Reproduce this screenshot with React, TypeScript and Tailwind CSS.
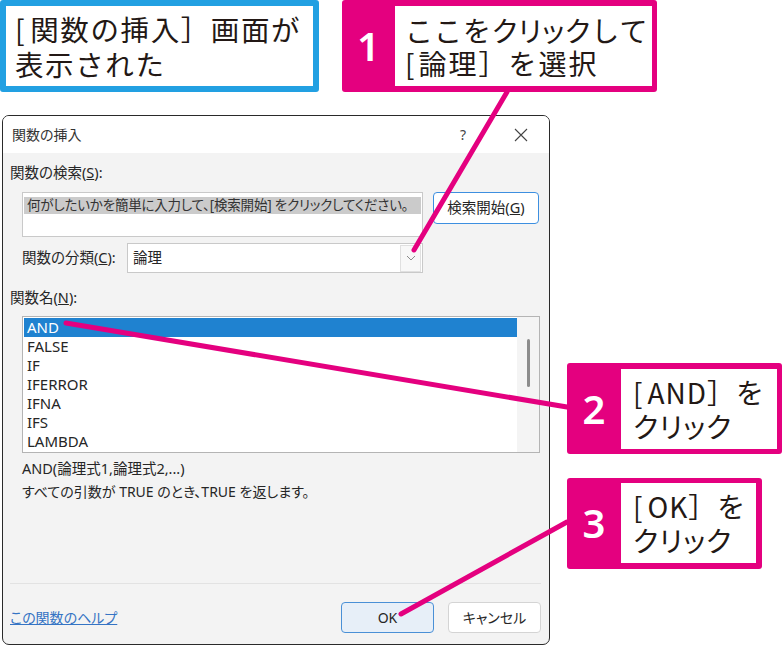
import React from "react";

const PINK = "bg-[#e4007f]";

function NumBox({ n }: { n: string }) {
  return (
    <div className="flex items-center justify-center text-white font-['Noto_Sans',sans-serif] font-semibold text-[40px] leading-none">
      {n}
    </div>
  );
}

function Dialog() {
  return (
    <div className="ml-[2px] w-[548px] h-[530px] border border-[#2a2a2a] rounded-[7px] overflow-hidden flex flex-col bg-[#f3f3f3] text-[#262626] font-['Noto_Sans','Noto_Sans_CJK_JP',sans-serif] [font-feature-settings:'palt']">
      {/* title bar */}
      <div className="h-[37px] bg-white flex items-center shrink-0">
        <div className="ml-[9px] text-[14px] leading-none text-[#333]">関数の挿入</div>
        <div className="ml-auto w-[58px] flex justify-center text-[14px] text-[#444] leading-none">?</div>
        <div className="w-[57px] flex justify-center">
          <svg width="14" height="14" viewBox="0 0 14 14">
            <path d="M1 1 L13 13 M13 1 L1 13" stroke="#444" strokeWidth="1.1" fill="none" />
          </svg>
        </div>
      </div>
      {/* body */}
      <div className="flex-1 flex flex-col text-[14.5px]">
        <div className="mt-[9px] ml-[7px] h-[20px] leading-[20px]">
          関数の検索(<span className="underline">S</span>):
        </div>
        <div className="mt-[10px] flex items-start">
          <div className="ml-[19px] w-[401px] h-[45px] bg-white border border-[#c9c9c9] pt-[4px] px-[1px] overflow-hidden">
            <div className="h-[17px] bg-[#cbcbcb] leading-[17px] whitespace-nowrap pl-[3px] text-[13.5px] tracking-[-0.2px] text-[#333]">
              何がしたいかを簡単に入力して、[検索開始] をクリックしてください。
            </div>
          </div>
          <div className="ml-[10px] w-[106px] h-[32px] bg-white border-[1.5px] border-[#3d8fe0] rounded-[4px] flex items-center justify-center">
            検索開始(<span className="underline">G</span>)
          </div>
        </div>
        <div className="mt-[6px] h-[30px] flex items-center">
          <div className="ml-[19px] w-[105px]">
            関数の分類(<span className="underline">C</span>):
          </div>
          <div className="w-[296px] h-[30px] bg-white border border-[#c9c9c9] flex items-center">
            <div className="pl-[5px] flex-1">論理</div>
            <div className="w-[21px] h-[27px] mr-[1px] border border-[#e0e0e0] bg-[#f8f8f8] flex items-center justify-center">
              <svg width="10" height="6" viewBox="0 0 10 6">
                <path d="M1 1 L5 5 L9 1" stroke="#8a8a8a" strokeWidth="1" fill="none" />
              </svg>
            </div>
          </div>
        </div>
        <div className="mt-[14px] ml-[7px] h-[20px] leading-[20px]">
          関数名(<span className="underline">N</span>):
        </div>
        <div className="mt-[9px] ml-[19px] w-[518px] h-[137px] border border-[#b4b4b4] bg-white flex">
          <div className="flex-1 pt-[1px] pl-[1px] text-[15px]">
            {["AND", "FALSE", "IF", "IFERROR", "IFNA", "IFS", "LAMBDA"].map((t, i) => (
              <div
                key={t}
                className={
                  i === 0
                    ? "h-[19px] leading-[19px] pl-[3px] bg-[#1f82d0] text-white"
                    : "h-[19px] leading-[19px] pl-[3px] text-[#262626]"
                }
              >
                {t}
              </div>
            ))}
          </div>
          <div className="w-[22px] bg-[#f4f4f4] flex justify-center pt-[22px]">
            <div className="w-[3px] h-[48px] rounded-full bg-[#8c8c8c]" />
          </div>
        </div>
        <div className="mt-[5px] ml-[19px] h-[20px] leading-[20px]">AND(論理式1,論理式2,...)</div>
        <div className="mt-[4px] ml-[19px] h-[20px] leading-[20px] text-[14px]">
          すべての引数が TRUE のとき、TRUE を返します。
        </div>
        <div className="mt-[81px] ml-[7px] mr-[8px] h-[1px] bg-[#e2e2e2]" />
        <div className="mt-[18px] flex items-center">
          <div className="ml-[7px] text-[#3574c4] underline text-[14px]">この関数のヘルプ</div>
          <div className="ml-auto w-[93px] h-[31px] rounded-[4px] border border-[#4a90d6] bg-[#e7eff8] flex items-center justify-center text-[14px]">
            OK
          </div>
          <div className="ml-[14px] mr-[8px] w-[93px] h-[31px] rounded-[4px] border border-[#d4d4d4] bg-white flex items-center justify-center text-[14px]">
            キャンセル
          </div>
        </div>
      </div>
    </div>
  );
}

export default function App() {
  return (
    <div className="relative w-[783px] h-[645px] bg-white overflow-hidden text-[#231815] font-['Noto_Sans_CJK_JP',sans-serif]">
      {/* top row */}
      <div className="flex h-[92px]">
        <div className="w-[319px] h-[92px] border-[6px] border-[#22a0e2] rounded-[3px] bg-white flex flex-col justify-center pl-[9px] text-[28.5px] leading-[35px] tracking-[1.6px] whitespace-nowrap">
          <div>
            [<span className="ml-[4px]">関数の挿入］画面が</span>
          </div>
          <div>表示された</div>
        </div>
        <div className={`ml-[23px] w-[315px] h-[92px] ${PINK} rounded-[3px] flex pt-[6px] pb-[6px] pr-[5px]`}>
          <div className="w-[53px] flex items-center justify-center">
            <NumBox n="1" />
          </div>
          <div className="flex-1 bg-white pl-[10px] pt-[2px] flex flex-col justify-center text-[28px] leading-[33px] tracking-[1px] whitespace-nowrap">
            <div>
              ここを<span className="[font-feature-settings:'palt']">クリック</span>して
            </div>
            <div>
              [<span className="ml-[3px] tracking-[2px]">論理］を選択</span>
            </div>
          </div>
        </div>
      </div>
      {/* second row */}
      <div className="flex mt-[23px]">
        <Dialog />
        <div className="ml-[17px] pt-[248px] flex flex-col gap-[24px]">
          <div className={`w-[215px] h-[91px] ${PINK} rounded-[3px] flex pt-[6px] pb-[5px] pr-[5px]`}>
            <div className="w-[54px] flex items-center justify-center">
              <NumBox n="2" />
            </div>
            <div className="flex-1 bg-white pl-[12px] flex flex-col justify-center text-[28px] leading-[34px] tracking-[1px] whitespace-nowrap">
              <div>
                [<span className="ml-[4px]">AND］を</span>
              </div>
              <div className="[font-feature-settings:'palt']">クリック</div>
            </div>
          </div>
          <div className={`w-[195px] h-[91px] ${PINK} rounded-[3px] flex pt-[5px] pb-[6px] pr-[6px]`}>
            <div className="w-[54px] flex items-center justify-center">
              <NumBox n="3" />
            </div>
            <div className="flex-1 bg-white pl-[12px] flex flex-col justify-center text-[28px] leading-[34px] tracking-[1px] whitespace-nowrap">
              <div>
                [<span className="ml-[4px]">OK］を</span>
              </div>
              <div className="[font-feature-settings:'palt']">クリック</div>
            </div>
          </div>
        </div>
      </div>
      {/* connector lines */}
      <svg className="absolute inset-0 pointer-events-none" width="783" height="645" viewBox="0 0 783 645">
        <g stroke="#e4007f" strokeWidth="5" strokeLinecap="round" fill="none">
          <line x1="507" y1="92" x2="414" y2="250" />
          <line x1="66" y1="323" x2="567" y2="407" />
          <line x1="401" y1="614" x2="567" y2="522" />
        </g>
      </svg>
    </div>
  );
}
